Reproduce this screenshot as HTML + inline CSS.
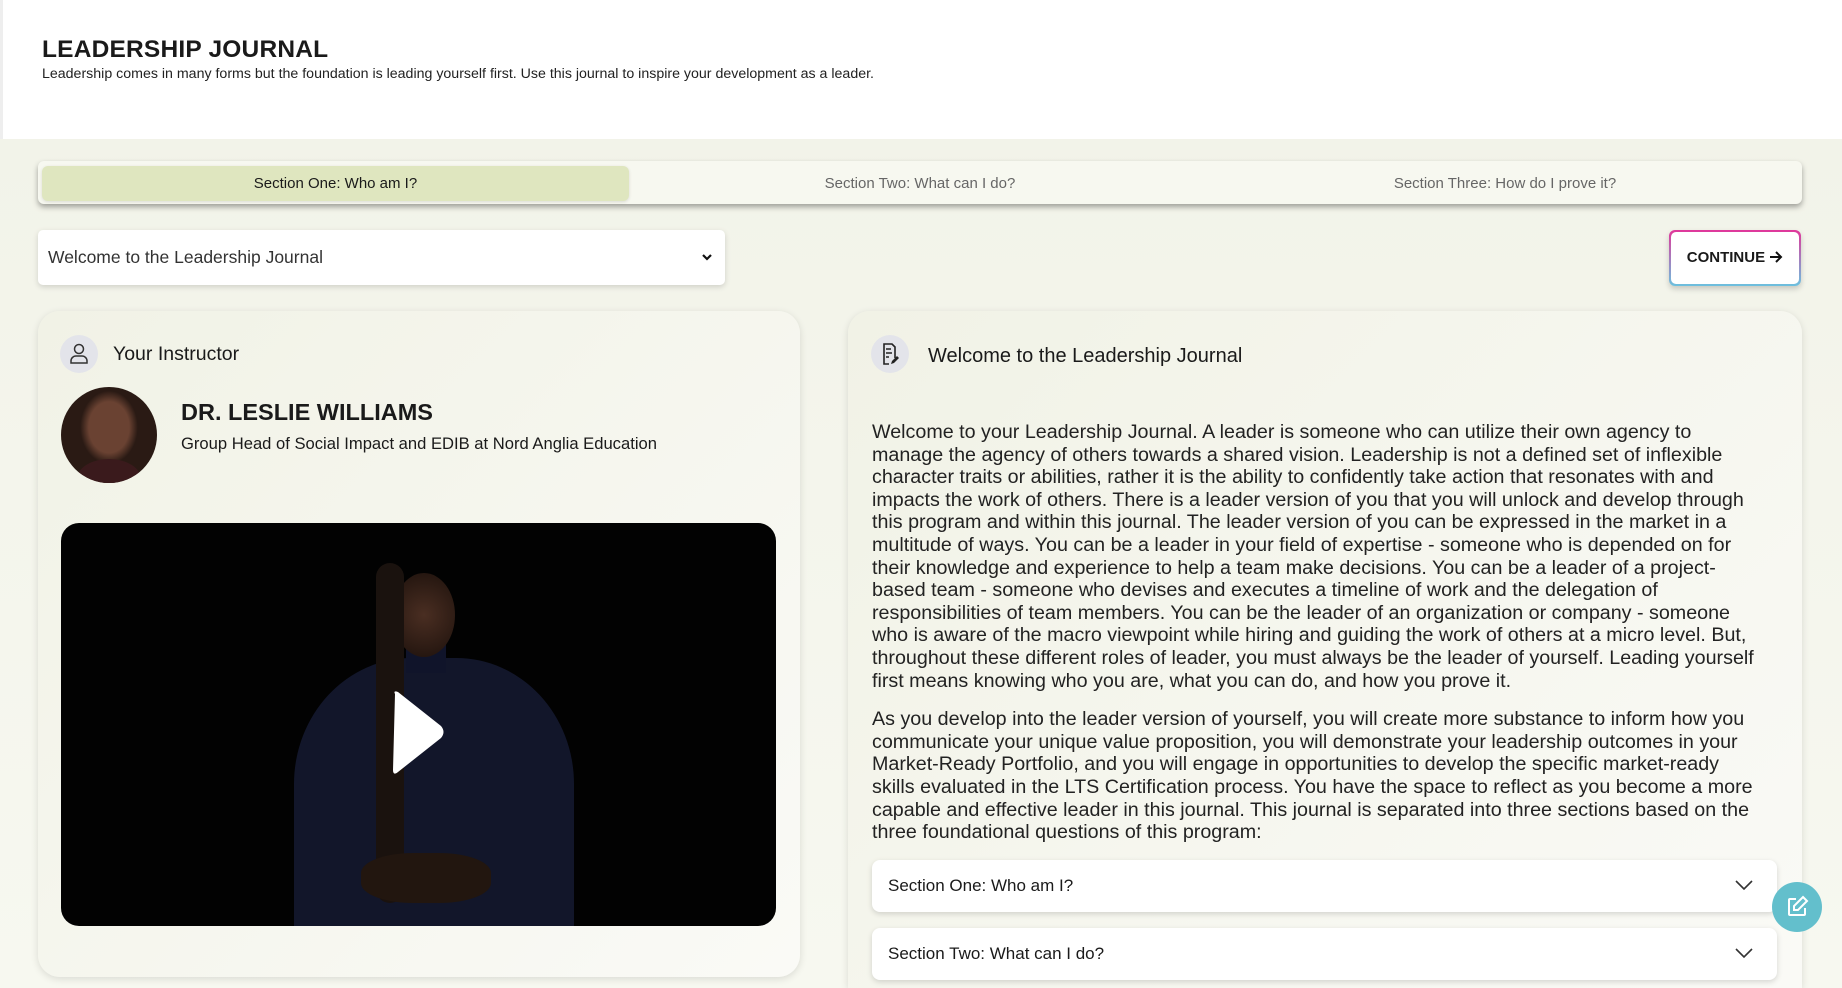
<!DOCTYPE html>
<html><head><meta charset="utf-8"><style>
*{box-sizing:border-box;margin:0;padding:0}
html{width:1842px;height:988px;overflow:hidden}
body{width:1842px;height:988px;overflow:hidden;font-family:"Liberation Sans",sans-serif;color:#1a1a1a;background:#f4f5ec;position:relative}
.hdr{position:absolute;left:0;top:0;width:1842px;height:139px;background:#fff;border-left:3px solid #eee}
.hdr h1{position:absolute;left:39px;top:36px;font-size:24.5px;font-weight:700;letter-spacing:0.2px}
.hdr p{position:absolute;left:39px;top:66px;font-size:14.2px;color:#222}
.main{position:absolute;left:0;top:139px;width:1842px;height:849px;background:linear-gradient(180deg,#f2f3e9,#f7f8f0)}
.tabs{position:absolute;left:38px;top:161px;width:1764px;height:43px;background:#f7f8f0;border-radius:6px;box-shadow:0 3px 6px rgba(0,0,0,.35)}
.tab{position:absolute;top:5px;height:35px;line-height:35px;text-align:center;font-size:15px;color:#666}
.tab.a{background:#dfe6bf;border-radius:6px;color:#1a1a1a;box-shadow:0 1px 3px rgba(0,0,0,.12)}
.dd{position:absolute;left:38px;top:230px;width:687px;height:55px;background:#fff;border-radius:5px;box-shadow:0 2px 6px rgba(0,0,0,.15);font-size:17.5px;line-height:55px;padding-left:10px;color:#333}
.btn{position:absolute;left:1669px;top:230px;width:132px;height:56px;border-radius:6px;background:linear-gradient(180deg,#e0379a,#6cc0de);padding:2px;box-shadow:0 3px 6px rgba(0,0,0,.18)}
.btn div{width:100%;height:100%;background:#fff;border-radius:5px;font-size:15px;font-weight:700;line-height:52px;text-align:center}
.card{position:absolute;background:linear-gradient(135deg,#f1f2e6,#fafaf6);border-radius:22px;box-shadow:0 2px 8px rgba(0,0,0,.12)}
.ic{position:absolute;width:38px;height:38px;border-radius:50%;background:#e3e4ea}
.vid{position:absolute;left:61px;top:523px;width:715px;height:403px;border-radius:18px;overflow:hidden;background:#020202}
.para{position:absolute;left:872px;top:421px;font-size:19.7px;line-height:22.6px;color:#222;white-space:nowrap}
.acc{position:absolute;left:872px;width:905px;height:52px;background:#fff;border-radius:8px;box-shadow:0 2px 6px rgba(0,0,0,.15);font-size:17px;line-height:52px;padding-left:16px}
.acc svg{position:absolute;right:24px;top:19px}
</style></head><body>
<div class="hdr"><h1>LEADERSHIP JOURNAL</h1><p>Leadership comes in many forms but the foundation is leading yourself first. Use this journal to inspire your development as a leader.</p></div>
<div class="main"></div>
<div class="tabs">
<div class="tab a" style="left:4px;width:587px">Section One: Who am I?</div>
<div class="tab" style="left:590px;width:584px">Section Two: What can I do?</div>
<div class="tab" style="left:1174px;width:586px">Section Three: How do I prove it?</div>
</div>
<div class="dd">Welcome to the Leadership Journal<svg style="position:absolute;right:12px;top:23px" width="12" height="9" viewBox="0 0 12 9"><path d="M2 2l4 4 4-4" stroke="#111" stroke-width="2.2" fill="none"/></svg></div>
<div class="btn"><div>CONTINUE <svg width="14" height="12" viewBox="0 0 14 12" style="vertical-align:-1px"><path d="M1 6h11M7 1l5 5-5 5" stroke="#111" stroke-width="2" fill="none"/></svg></div></div>

<div class="card" style="left:38px;top:311px;width:762px;height:666px">
<div class="ic" style="left:22px;top:24px"><svg width="38" height="38" viewBox="0 0 38 38"><circle cx="19" cy="14" r="4.5" stroke="#333" stroke-width="1.5" fill="none"/><path d="M11 28v-2a5 5 0 015-5h6a5 5 0 015 5v2z" stroke="#333" stroke-width="1.5" fill="none"/></svg></div>
<div style="position:absolute;left:75px;top:32px;font-size:19.5px">Your Instructor</div>
<div style="position:absolute;left:23px;top:76px;width:96px;height:96px;border-radius:50%;background:radial-gradient(ellipse 30% 38% at 50% 42%,#6a4232 0 70%,#2a1a14 100%),#a8a8a8;overflow:hidden"><div style="position:absolute;left:16px;top:72px;width:64px;height:40px;border-radius:50%;background:#3a1a1c"></div></div>
<div style="position:absolute;left:143px;top:88px;font-size:23.5px;font-weight:700">DR. LESLIE WILLIAMS</div>
<div style="position:absolute;left:143px;top:123px;font-size:16.6px">Group Head of Social Impact and EDIB at Nord Anglia Education</div>
</div>
<div class="vid">
<div style="position:absolute;left:233px;top:135px;width:280px;height:300px;border-radius:42% 42% 0 0;background:#12162a"></div>
<div style="position:absolute;left:345px;top:90px;width:40px;height:60px;background:#10142a"></div>
<div style="position:absolute;left:332px;top:50px;width:62px;height:84px;border-radius:50%;background:radial-gradient(circle at 50% 50%,#4a2e22,#23150f 85%)"></div>
<div style="position:absolute;left:315px;top:40px;width:28px;height:340px;border-radius:14px;background:#1a120e"></div>
<div style="position:absolute;left:300px;top:330px;width:130px;height:50px;border-radius:40%;background:#22160f"></div>
<svg style="position:absolute;left:328px;top:165px" width="60" height="90" viewBox="0 0 60 90"><path d="M6 6Q4 2 9 4L52 38Q57 44 52 50L9 84Q4 88 4 82Z" fill="#fff"/></svg>
</div>

<div class="card" style="left:848px;top:311px;width:954px;height:677px;border-radius:22px 22px 0 0">
<div class="ic" style="left:23px;top:24px"><svg width="38" height="38" viewBox="0 0 38 38"><path d="M24 23V12l-3-3h-8v20h5" stroke="#222" stroke-width="1.6" fill="none"/><path d="M15 14h5M15 18h6M15 22h3" stroke="#222" stroke-width="1.5"/><path d="M20 29l1-3 5-5 2 2-5 5z" fill="#222"/></svg></div>
<div style="position:absolute;left:80px;top:34px;font-size:20px">Welcome to the Leadership Journal</div>
</div>
<div class="para" style="top:421px">Welcome to your Leadership Journal. A leader is someone who can utilize their own agency to<br>manage the agency of others towards a shared vision. Leadership is not a defined set of inflexible<br>character traits or abilities, rather it is the ability to confidently take action that resonates with and<br>impacts the work of others. There is a leader version of you that you will unlock and develop through<br>this program and within this journal. The leader version of you can be expressed in the market in a<br>multitude of ways. You can be a leader in your field of expertise - someone who is depended on for<br>their knowledge and experience to help a team make decisions. You can be a leader of a project-<br>based team - someone who devises and executes a timeline of work and the delegation of<br>responsibilities of team members. You can be the leader of an organization or company - someone<br>who is aware of the macro viewpoint while hiring and guiding the work of others at a micro level. But,<br>throughout these different roles of leader, you must always be the leader of yourself. Leading yourself<br>first means knowing who you are, what you can do, and how you prove it.
<div style="height:16px"></div>As you develop into the leader version of yourself, you will create more substance to inform how you<br>communicate your unique value proposition, you will demonstrate your leadership outcomes in your<br>Market-Ready Portfolio, and you will engage in opportunities to develop the specific market-ready<br>skills evaluated in the LTS Certification process. You have the space to reflect as you become a more<br>capable and effective leader in this journal. This journal is separated into three sections based on the<br>three foundational questions of this program:</div>
<div class="acc" style="top:860px">Section One: Who am I?<svg width="18" height="12" viewBox="0 0 18 12"><path d="M1 2l8 8 8-8" stroke="#333" stroke-width="1.6" fill="none"/></svg></div>
<div class="acc" style="top:928px">Section Two: What can I do?<svg width="18" height="12" viewBox="0 0 18 12"><path d="M1 2l8 8 8-8" stroke="#333" stroke-width="1.6" fill="none"/></svg></div>
<div style="position:absolute;left:1772px;top:882px;width:50px;height:50px;border-radius:50%;background:#63bfcc"><svg style="position:absolute;left:13px;top:13px" width="24" height="24" viewBox="0 0 24 24"><path d="M11 4H5a1 1 0 00-1 1v14a1 1 0 001 1h14a1 1 0 001-1v-6" stroke="#fff" stroke-width="2" fill="none"/><path d="M18 2l4 4-9 9H9v-4z" stroke="#fff" stroke-width="2" fill="none"/></svg></div>
</body></html>
